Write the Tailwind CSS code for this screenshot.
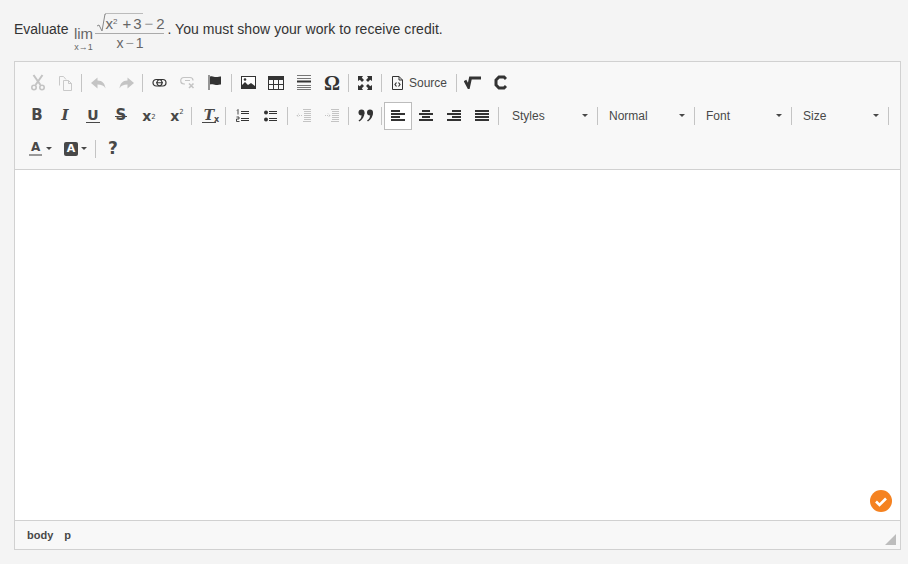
<!DOCTYPE html>
<html lang="en">
<head>
    <meta charset="UTF-8">
    <title>Question</title>
    <script src="https://cdn.jsdelivr.net/npm/@tailwindcss/browser@4"></script>
</head>
<body class="bg-[#f4f4f4] font-['Liberation_Sans',Arial,sans-serif] h-[564px] overflow-hidden">
    <!-- Question -->
    <div class="h-[61px] pl-[14px] pt-[11px] flex items-start text-[14px] text-[#333]">
        <span class="mt-[8px]">Evaluate</span>
        <span class="ml-[5px] mt-[16px] flex flex-col items-center w-[20px] text-[#666]">
            <span class="text-[15px] leading-[13px]">lim</span>
            <span class="text-[9px] leading-[9px] mt-[3px] whitespace-nowrap">x→1</span>
        </span>
        <span class="ml-[2px] flex flex-col items-center w-[69px] text-[#666] text-[15px]">
            <span class="h-[23px] flex items-end whitespace-nowrap border-b border-[#aaa] w-full pl-[2px] leading-[19px]">
                <svg class="w-[9px] h-[20px] shrink-0" viewBox="0 0 9 20" fill="none" stroke="#888"><path d="M0 13l2-1 3 6 3-17h1"/></svg>
                <span class="border-t border-[#bbb] pr-[1px] -ml-[1px] h-[20px]">x<sup class="text-[8px] -top-[5px]">2</sup><span class="ml-[5px]">+</span><span class="ml-[2px]">3</span></span>
                <span class="ml-[2px] text-[#999]">−</span><span class="ml-[3px]">2</span>
            </span>
            <span class="leading-[17px] mt-[1px] text-[14px] flex gap-[2px]"><span>x</span><span class="text-[#999]">−</span><span>1</span></span>
        </span>
        <span class="mt-[8px] ml-[3px] tracking-[0.05px]">. You must show your work to receive credit.</span>
    </div>

    <!-- Editor -->
    <div class="relative ml-[14px] w-[887px] h-[489px] border border-[#d1d1d1] bg-white flex flex-col">
        <div class="h-[108px] bg-[#f8f8f8] border-b border-[#d1d1d1] pl-[9px] pt-[4px] text-[#484848]">
            <!-- row 1 -->
            <div class="flex items-center h-[33px]">
                <button class="w-[28px] h-[26px] flex items-center justify-center">
                    <svg width="16" height="17" viewBox="0 0 16 17" fill="none" stroke="#c4c4c4" stroke-width="2"><path d="M3.500 1l7 10M12.500 1l-7 10"/><circle cx="4" cy="13.500" r="2.200" stroke-width="1.600"/><circle cx="12" cy="13.500" r="2.200" stroke-width="1.600"/></svg>
                </button>
                <button class="w-[28px] h-[26px] flex items-center justify-center -ml-[1px]">
                    <svg width="15" height="16" viewBox="0 0 15 16" fill="none" stroke="#c9c9c9"><path d="M1.500 10.500V1.500h4l2.500 3M5.500 5.500h5l3 3v7h-8zM10.500 5.500v3h3"/></svg>
                </button>
                <div class="w-px h-[18px] bg-[#c4c4c4] ml-[2px] mr-[2px]"></div>
                <button class="w-[28px] h-[26px] flex items-center justify-center">
                    <svg width="15" height="12" viewBox="0 0 15 12" fill="#c4c4c4"><path d="M0 6l6.500-5.500V3.500c5 0 7.500 3 8 8-1.500-3-4-4-8-4v4z"/></svg>
                </button>
                <button class="w-[28px] h-[26px] flex items-center justify-center">
                    <svg width="15" height="12" viewBox="0 0 15 12" fill="#c4c4c4"><path d="M15 6L8.500.5V3.500c-5 0-7.500 3-8 8 1.500-3 4-4 8-4v4z"/></svg>
                </button>
                <div class="w-px h-[18px] bg-[#c4c4c4] ml-[2px] mr-[2px]"></div>
                <button class="w-[28px] h-[26px] flex items-center justify-center">
                    <svg width="15" height="10" viewBox="0 0 15 10" fill="none" stroke="#333" stroke-width="1.200"><rect x="1" y="1.500" width="9" height="6.500" rx="3.200"/><rect x="5" y="1.500" width="9" height="6.500" rx="3.200"/><path d="M4 4.750h7" stroke-width="1"/></svg>
                </button>
                <button class="w-[28px] h-[26px] flex items-center justify-center">
                    <svg width="15" height="13" viewBox="0 0 15 13" fill="none" stroke="#c4c4c4" stroke-width="1.200"><path d="M5 8H4a3 3 0 010-6.500h6a3 3 0 013 3M5 4.500h5"/><path d="M9 7.500l4.500 4.500M13.500 7.500L9 12" stroke-width="1.600"/></svg>
                </button>
                <button class="w-[28px] h-[26px] flex items-center justify-center">
                    <svg width="14" height="15" viewBox="0 0 14 15"><path d="M1 0v15" stroke="#333"/><path d="M2 1.500c2.500-1 4 .5 6 .5 2 0 4-.5 5-.5v8c-1 0-3 .5-5 .5s-3.500-1-6-.5z" fill="#333"/></svg>
                </button>
                <div class="w-px h-[18px] bg-[#c4c4c4] ml-[2px] mr-[2px]"></div>
                <button class="w-[28px] h-[26px] flex items-center justify-center">
                    <svg width="15" height="13" viewBox="0 0 15 13"><rect x=".5" y=".5" width="14" height="12" fill="#fff" stroke="#333"/><path d="M1 12V9l3-3 3 3 3-2 4 3v2z" fill="#333"/><circle cx="4" cy="3.500" r="1.300" fill="#333"/></svg>
                </button>
                <button class="w-[28px] h-[26px] flex items-center justify-center">
                    <svg width="16" height="14" viewBox="0 0 16 14" fill="none" stroke="#333"><rect x=".5" y=".5" width="15" height="13"/><path d="M0 2.500h16" stroke-width="3"/><path d="M0 8.500h16M5.500 4v10M10.500 4v10"/></svg>
                </button>
                <button class="w-[28px] h-[26px] flex items-center justify-center">
                    <svg width="14" height="16" viewBox="0 0 14 16" fill="none" stroke="#777"><path d="M0 .5h14M0 3.500h14M0 10.500h14M0 12.500h14M0 14.500h14"/><path d="M0 6.500h14" stroke="#333" stroke-width="2"/></svg>
                </button>
                <button class="w-[28px] h-[26px] flex items-center justify-center font-['Liberation_Serif',serif] font-bold text-[20px] text-[#333]">Ω</button>
                <div class="w-px h-[18px] bg-[#c4c4c4] ml-[2px] mr-[2px]"></div>
                <button class="w-[28px] h-[26px] flex items-center justify-center">
                    <svg width="14" height="14" viewBox="0 0 14 14" fill="#333"><path d="M0 0h5L3.800 1.800 6 4 4 6 1.800 3.800 0 5zM14 0v5L12.200 3.800 10 6 8 4 10.200 1.800 9 0zM0 14V9L1.800 10.200 4 8 6 10 3.800 12.200 5 14zM14 14H9L10.200 12.200 8 10 10 8 12.200 10.200 14 9z"/></svg>
                </button>
                <div class="w-px h-[18px] bg-[#c4c4c4] ml-[2px] mr-[2px]"></div>
                <button class="h-[26px] flex items-center pl-[8px] pr-[8px] text-[12px]">
                    <svg width="11" height="14" viewBox="0 0 11 14" fill="none" stroke="#333"><path d="M.5.500h6.500l3.500 3.500v9.500h-10zM7 .5V4h3.500"/><path d="M4.500 6.500L3 8.500l1.500 2M6.500 6.500L8 8.500l-1.500 2" stroke-width="1.200"/></svg>
                    <span class="ml-[6px]">Source</span>
                </button>
                <div class="w-px h-[18px] bg-[#c4c4c4] ml-[1px] mr-[1px]"></div>
                <button class="w-[28px] h-[26px] flex items-center justify-center">
                    <svg width="17" height="13" viewBox="0 0 17 13" fill="none" stroke="#333"><path d="M1 4.500l3.500 6.500 2-9H17" stroke-width="3"/></svg>
                </button>
                <button class="w-[28px] h-[26px] flex items-center justify-center">
                    <svg width="14" height="15" viewBox="0 0 14 15" fill="none" stroke="#333" stroke-width="3"><path d="M13 4l-2-2H6L3 5v5l3 3h5l2-2"/></svg>
                </button>
            </div>
            <!-- row 2 -->
            <div class="flex items-center h-[33px] -ml-[1px]">
                <button class="w-[28px] h-[26px] flex items-center justify-center font-['DejaVu_Sans',sans-serif] font-bold text-[15px] leading-none">B</button>
                <button class="w-[28px] h-[26px] flex items-center justify-center font-['DejaVu_Serif',serif] font-bold italic text-[15px] leading-none">I</button>
                <button class="w-[28px] h-[26px] flex items-center justify-center">
                    <span class="font-['DejaVu_Sans',sans-serif] font-bold text-[14px] leading-[13px] border-b border-[#484848] px-[1px]">U</span>
                </button>
                <button class="w-[28px] h-[26px] flex items-center justify-center relative font-['DejaVu_Sans',sans-serif] font-bold text-[15px] leading-none">S<span class="absolute left-[8px] right-[8px] top-[13px] h-px bg-[#484848]"></span></button>
                <button class="w-[28px] h-[26px] flex items-center justify-center font-['DejaVu_Sans',sans-serif] font-bold text-[14px] leading-none">x<sub class="text-[7px] font-normal">2</sub></button>
                <button class="w-[28px] h-[26px] flex items-center justify-center font-['DejaVu_Sans',sans-serif] font-bold text-[14px] leading-none">x<sup class="text-[7px] font-normal">2</sup></button>
                <div class="w-px h-[18px] bg-[#c4c4c4] mr-[3px]"></div>
                <button class="w-[28px] h-[26px] flex items-center justify-center relative">
                    <span class="font-['DejaVu_Serif',serif] font-bold italic text-[14px] leading-[13px] border-b border-[#484848] px-[2px]">T</span><span class="absolute left-[19px] top-[13px] font-['DejaVu_Sans',sans-serif] font-bold text-[8px] leading-none">x</span>
                </button>
                <div class="w-px h-[18px] bg-[#c4c4c4] ml-[2px] mr-[2px]"></div>
                <button class="w-[28px] h-[26px] flex items-center justify-center">
                    <svg width="13" height="13" viewBox="0 0 13 13" fill="none" stroke="#333"><path d="M5 2.500h8M5 4.500h8M5 9.500h8M5 11.500h8"/><path d="M1 1.500l1-1v5" stroke-width=".9"/><path d="M.5 8h2.500v2H.5v2.500h3" stroke-width=".9"/></svg>
                </button>
                <button class="w-[28px] h-[26px] flex items-center justify-center">
                    <svg width="13" height="12" viewBox="0 0 13 12" fill="none" stroke="#333"><circle cx="2" cy="2.500" r="2" fill="#333" stroke="none"/><circle cx="2" cy="9.500" r="2" fill="#333" stroke="none"/><path d="M5 1.500h8M5 3.500h8M5 8.500h8M5 10.500h8"/></svg>
                </button>
                <div class="w-px h-[18px] bg-[#c4c4c4] ml-[3px] mr-[1px]"></div>
                <button class="w-[28px] h-[26px] flex items-center justify-center">
                    <svg width="15" height="13" viewBox="0 0 15 13" fill="none" stroke="#c4c4c4"><path d="M7 .5h8M8 2.500h7M8 4.500h7M8 6.500h7M8 8.500h7M8 10.500h7M7 12.500h8"/><path d="M6 6.500H1M3 4.500l-2 2 2 2" stroke-dasharray="1 1"/></svg>
                </button>
                <button class="w-[28px] h-[26px] flex items-center justify-center">
                    <svg width="15" height="13" viewBox="0 0 15 13" fill="none" stroke="#c4c4c4"><path d="M7 .5h8M8 2.500h7M8 4.500h7M8 6.500h7M8 8.500h7M8 10.500h7M7 12.500h8"/><path d="M1 6.500h5M4 4.500l2 2-2 2" stroke-dasharray="1 1"/></svg>
                </button>
                <div class="w-px h-[18px] bg-[#c4c4c4] ml-[3px] mr-[3px]"></div>
                <button class="w-[28px] h-[26px] flex items-center justify-center">
                    <svg width="16" height="13" viewBox="0 0 16 13" fill="#333"><circle cx="3.500" cy="3.500" r="3"/><path d="M6.500 3.500c0 4-2 7-5 9l-1-1c2-1 3-3 3-5z"/><circle cx="12" cy="3.500" r="3"/><path d="M15 3.500c0 4-2 7-5 9l-1-1c2-1 3-3 3-5z"/></svg>
                </button>
                <div class="w-px h-[18px] bg-[#c4c4c4] ml-[1px] mr-[2px]"></div>
                <button class="w-[28px] h-[28px] flex items-center justify-center border border-[#bcbcbc] bg-white">
                    <svg width="14" height="12" viewBox="0 0 14 12" fill="#333"><path d="M0 0h9v2H0zM0 3h14v2H0zM0 6h9v2H0zM0 9h14v2H0z"/></svg>
                </button>
                <button class="w-[28px] h-[26px] flex items-center justify-center">
                    <svg width="14" height="12" viewBox="0 0 14 12" fill="#333"><path d="M3 0h8v2H3zM0 3h14v2H0zM3 6h8v2H3zM0 9h14v2H0z"/></svg>
                </button>
                <button class="w-[28px] h-[26px] flex items-center justify-center">
                    <svg width="14" height="12" viewBox="0 0 14 12" fill="#333"><path d="M5 0h9v2H5zM0 3h14v2H0zM5 6h9v2H5zM0 9h14v2H0z"/></svg>
                </button>
                <button class="w-[28px] h-[26px] flex items-center justify-center">
                    <svg width="14" height="12" viewBox="0 0 14 12" fill="#333"><path d="M0 0h14v2H0zM0 3h14v2H0zM0 6h14v2H0zM0 9h14v2H0z"/></svg>
                </button>
                <div class="w-px h-[18px] bg-[#c4c4c4] ml-[2px] mr-[3px]"></div>
                <div class="w-[95px] h-[26px] flex items-center justify-between pl-[10px] pr-[9px] text-[12px]">
                    <span>Styles</span><span class="w-0 h-0 border-x-[3px] border-x-transparent border-t-[3px] border-t-[#484848]"></span>
                </div>
                <div class="w-px h-[18px] bg-[#c4c4c4] mr-[1px]"></div>
                <div class="w-[95px] h-[26px] flex items-center justify-between pl-[10px] pr-[9px] text-[12px]">
                    <span>Normal</span><span class="w-0 h-0 border-x-[3px] border-x-transparent border-t-[3px] border-t-[#484848]"></span>
                </div>
                <div class="w-px h-[18px] bg-[#c4c4c4] mr-[1px]"></div>
                <div class="w-[95px] h-[26px] flex items-center justify-between pl-[10px] pr-[9px] text-[12px]">
                    <span>Font</span><span class="w-0 h-0 border-x-[3px] border-x-transparent border-t-[3px] border-t-[#484848]"></span>
                </div>
                <div class="w-px h-[18px] bg-[#c4c4c4] mr-[1px]"></div>
                <div class="w-[95px] h-[26px] flex items-center justify-between pl-[10px] pr-[9px] text-[12px]">
                    <span>Size</span><span class="w-0 h-0 border-x-[3px] border-x-transparent border-t-[3px] border-t-[#484848]"></span>
                </div>
                <div class="w-px h-[18px] bg-[#c4c4c4]"></div>
            </div>
            <!-- row 3 -->
            <div class="flex items-center h-[33px]">
                <button class="w-[39px] h-[26px] flex items-center pl-[5px]">
                    <span class="font-['DejaVu_Sans',sans-serif] font-bold text-[12px] leading-[13px] border-b-2 border-[#999] px-[2px]">A</span>
                    <span class="ml-[4px] w-0 h-0 border-x-[3px] border-x-transparent border-t-[3px] border-t-[#484848]"></span>
                </button>
                <button class="w-[32px] h-[26px] flex items-center pl-[1px]">
                    <span class="w-[14px] h-[14px] bg-[#484848] rounded-[2px] text-white font-['DejaVu_Sans',sans-serif] font-bold text-[11px] leading-[14px] text-center">A</span>
                    <span class="ml-[3px] w-0 h-0 border-x-[3px] border-x-transparent border-t-[3px] border-t-[#484848]"></span>
                </button>
                <div class="w-px h-[18px] bg-[#c4c4c4] mr-[3px]"></div>
                <button class="w-[28px] h-[26px] flex items-center justify-center font-['DejaVu_Sans',sans-serif] font-bold text-[17px] leading-none">?</button>
            </div>
        </div>

        <!-- Content area -->
        <div class="flex-1 bg-white"></div>

        <!-- Status bar -->
        <div class="h-[29px] bg-[#f8f8f8] border-t border-[#d1d1d1] pl-[12px] flex items-center gap-[11px] font-bold text-[11px] text-[#484848]">
            <span>body</span><span>p</span>
        </div>
        <span class="absolute right-[4px] bottom-[4px] w-0 h-0 border-l-[11px] border-l-transparent border-b-[11px] border-b-[#bdbdbd]"></span>

        <!-- Saved badge -->
        <span class="absolute left-[855px] top-[428px] w-[22px] h-[22px] rounded-full bg-[#f58220] flex items-center justify-center">
            <svg width="14" height="11" viewBox="0 0 14 11" fill="none" stroke="#fff" stroke-width="2.600"><path d="M2 5.500l3.500 3.500L12 2.500"/></svg>
        </span>
    </div>
</body>
</html>
